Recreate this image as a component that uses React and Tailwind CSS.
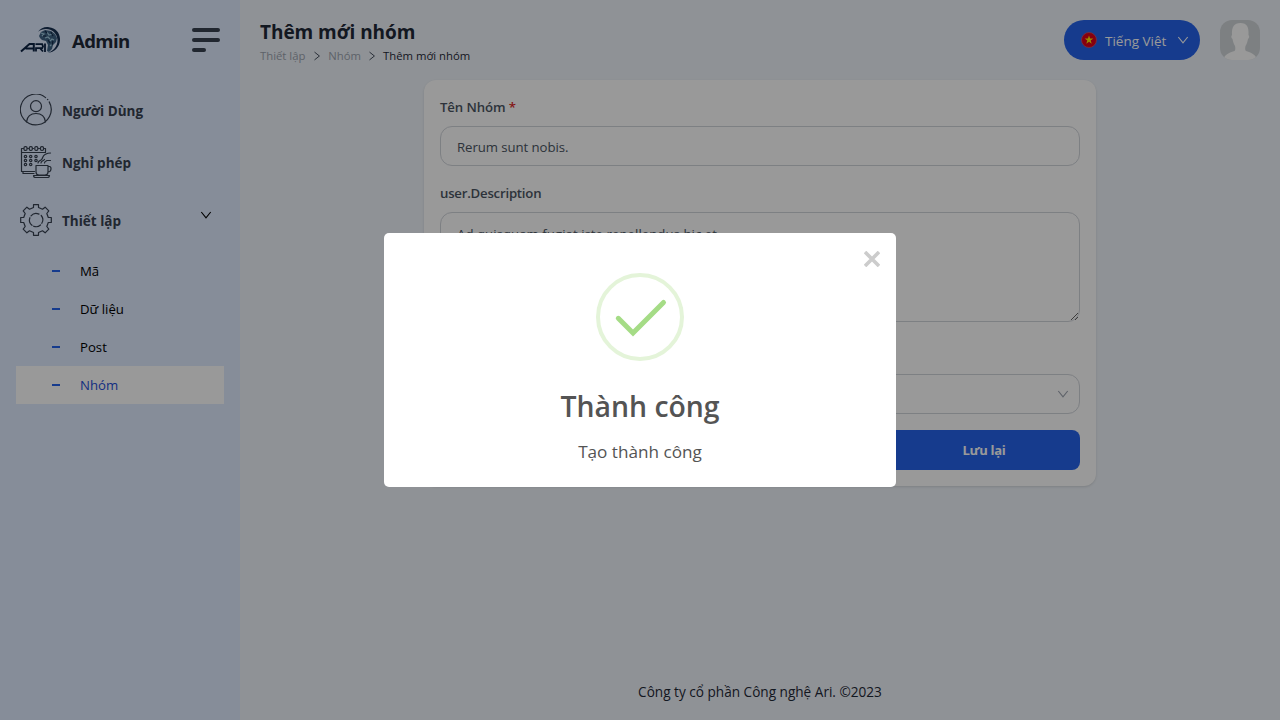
import React from 'react';

function Logo() {
  return (
    <svg className="h-10 w-10 shrink-0" viewBox="0 0 40 40" fill="none">
      <path d="M18 11.800C20.500 8 25 6.500 29 7.200c7 .8 11.300 6 11 12.800-.3 7-5.500 12.500-12.500 12.900 6-2 10.200-7 10-12.900C37.200 13.500 32 9 26 9c-3 0-5.500.8-8 2.800Z" fill="#183153" />
      <path d="M19 16l2-4 4-2 6 1 4 3 2 4-1 4-3 3-1 4-3 3-2-1 1-6-2-4-4-1-2-2Z" fill="#3f6384" />
      <path d="M21 13l3 1-2 2M27 12l2 3 4-1M25 18l3-1 2 2M30 21l2-2 2 1M30 26l2-2" stroke="#9ec9dd" strokeWidth="1.2" />
      <path d="M25 11l2 2M31 12l2 4M23 16h3M28 20l2 3M33 21l-1 4" stroke="#142c4b" strokeWidth="1.2" />
      <path d="M1 31.500l8.500-7.500h4.300v7.500M5.500 28.500h8" stroke="#0d2344" strokeWidth="2" />
      <path d="M16 31.500v-3.300h6.200l.8-1.800-.8-2.200H15.500M20 28.200l3 3.300M25 23.500v8.500" stroke="#0d2344" strokeWidth="1.8" />
    </svg>
  );
}

function UserIcon() {
  return (
    <svg className="h-8 w-8 shrink-0" viewBox="0 0 32 32" fill="none" stroke="#374151" strokeWidth="1.2" strokeLinecap="round">
      <path d="M25.600 3.600A15.400 15.400 0 1 0 29.200 7.900M27.500 5.400l.3.300" />
      <circle cx="16" cy="12.200" r="5.500" />
      <path d="M6.500 27.800C7.200 22.500 11 19.500 16 19.500s8.800 3 9.500 8.300" />
    </svg>
  );
}

function LeaveIcon() {
  return (
    <svg className="h-8 w-8 shrink-0" viewBox="0 0 32 32" fill="none" stroke="#374151" strokeWidth="1.2" strokeLinecap="round" strokeLinejoin="round">
      <path d="M3.500 2.500h-2v23h13M25.500 6V2.500h-1M1.500 6.500h24M3 25.500v2h11" />
      <path d="M7.500 2.500h1M12.500 2.500h1M18.500 2.500h1" />
      <rect x="4" y=".6" width="3" height="3.800" rx="1.200" />
      <rect x="9.300" y=".6" width="3" height="3.800" rx="1.200" />
      <rect x="14.800" y=".6" width="3" height="3.800" rx="1.200" />
      <rect x="20.500" y=".6" width="3" height="3.800" rx="1.200" />
      {[10.5, 14.5, 18.5].map((y) =>
        [5.5, 10.7, 16].map((x) =>
          x === 16 && y === 18.5 ? null : <circle key={x + '-' + y} cx={x} cy={y} r="1.200" />
        )
      )}
      <path d="M16 19.500h12v6.500c0 2-1 3-3 3h-6c-2 0-3-1-3-3ZM28 20.500h1.500c2.200 0 2.200 5.500-1.500 5.500M13.500 29.500h16c0 1.200-.8 2-2 2h-12c-1.200 0-2-.8-2-2Z" />
      <path d="M18 17c0-2.500 3-2 4-4s1-3.500 3-4.500 2-1.500 5.500-1.500M21 17c0-2 2.500-2 3.500-3.500M24.500 17c0-1.500 1.500-2 2.500-2.500H30.500" />
    </svg>
  );
}

function GearIcon() {
  return (
    <svg className="h-8 w-8 shrink-0" viewBox="0 0 32 32" fill="none" stroke="#374151" strokeWidth="1.2" strokeLinecap="round" strokeLinejoin="round">
      <path d="M13.500.7h5v2.800l4 1.700 2.600-2 3.700 3.700-2 2.600 1.500 4h3v5h-3l-1.500 4 2 2.600-3.700 3.700-2.600-2-4 1.700v2.800h-5v-2.800l-4-1.700-2.600 2-3.700-3.700 2-2.600-1.500-4h-3v-5h3l1.500-4-2-2.600 3.700-3.700 2.600 2 4-1.700Z" />
      <path d="M21.200 11.500a6.700 6.700 0 0 1 .6 7.800M20.500 21a6.700 6.700 0 0 1-6.900 1.200M12 21.300a6.700 6.700 0 0 1-2.100-7.600M11 11.800a6.700 6.700 0 0 1 8-1.700" />
    </svg>
  );
}

function Chevron({ className }) {
  return (
    <svg className={className} viewBox="0 0 12 12" fill="none" stroke="currentColor" strokeWidth="1.100">
      <path d="M1.300 3 6 8.900 10.700 3" />
    </svg>
  );
}

function MenuRow({ icon, label, className, children }) {
  return (
    <div className={`flex h-8 items-center px-5 ${className}`}>
      {icon}
      <span className="ml-2.5 pt-0.5 text-[13.500px] font-bold text-[#374151]">{label}</span>
      {children}
    </div>
  );
}

function Sidebar() {
  return (
    <aside className="h-full w-60 shrink-0 bg-[#dfebff] pt-5">
      <div className="flex h-10 items-center pl-5 pr-5">
        <Logo />
        <span className="ml-3 pt-0.5 text-[18.600px] font-bold tracking-[-0.65px] text-[#1f2937]">Admin</span>
        <div className="ml-auto flex w-7 flex-col gap-1.5">
          <span className="h-1 w-7 rounded-full bg-[#374151]" />
          <span className="h-1 w-7 rounded-full bg-[#374151]" />
          <span className="h-1 w-3.5 rounded-full bg-[#374151]" />
        </div>
      </div>
      <MenuRow icon={<UserIcon />} label="Người Dùng" className="mt-[34px]" />
      <MenuRow icon={<LeaveIcon />} label="Nghỉ phép" className="mt-5" />
      <MenuRow icon={<GearIcon />} label="Thiết lập" className="mt-[26px]">
        <Chevron className="-mt-2.5 ml-auto mr-2 h-3 w-3 text-black" />
      </MenuRow>
      <ul className="mx-4 mt-4">
        {['Mã', 'Dữ liệu', 'Post', 'Nhóm'].map((item) => (
          <li
            key={item}
            className={`flex h-[38px] items-center pl-9 text-[13.200px] ${item === 'Nhóm' ? 'bg-white text-[#1d4ed8]' : 'text-black'}`}
          >
            <span className="h-0.5 w-2 bg-[#2563eb]" />
            <span className="ml-5 pt-0.5">{item}</span>
          </li>
        ))}
      </ul>
    </aside>
  );
}

function Header() {
  return (
    <header className="flex h-20 justify-between px-5 pt-5">
      <div>
        <h1 className="text-[19px] font-bold leading-6 tracking-[-0.050px] text-[#1f2937]">Thêm mới nhóm</h1>
        <nav className="flex h-6 items-center text-[11.300px] text-[#9ca3af]">
          <span>Thiết lập</span>
          <Chevron className="mx-[6.500px] h-2.5 w-2.5 -rotate-90 text-[#374151]" />
          <span>Nhóm</span>
          <Chevron className="mx-[6px] h-2.5 w-2.5 -rotate-90 text-[#374151]" />
          <span className="text-[#1f2937]">Thêm mới nhóm</span>
        </nav>
      </div>
      <div className="flex gap-5">
        <div className="flex h-10 w-[136px] items-center rounded-[20px] bg-[#2563eb] pl-[17px] text-white">
          <svg className="h-4 w-4" viewBox="0 0 16 16">
            <circle cx="8" cy="8" r="7.500" fill="#e00019" stroke="#d95568" strokeWidth=".7" />
            <path d="M8 3.500 9.100 6.600h3.200L9.700 8.600l1 3.100L8 9.800l-2.700 1.900 1-3.100-2.600-2h3.200Z" fill="#ffe600" />
          </svg>
          <span className="ml-2 pt-0.5 text-[13.500px]">Tiếng Việt</span>
          <Chevron className="ml-auto mr-[11px] h-3 w-3" />
        </div>
        <svg className="h-10 w-10 rounded-xl" viewBox="0 0 40 40">
          <path d="M0 0h40v40H0Z" fill="#d1d6d9" />
          <path d="M3.500 40C4 35 8 33 14.500 31c1-.8 1-3 .5-5-1.500-2-2-5-2.500-7-1.500-1-1.500-3-.5-4C11.500 7 14 3 20.500 3s8.500 4 8 12c1 1 1 3-.5 4-.5 2-1 5-2.500 7-.5 2-.5 4.200.5 5 6.500 2 10 4 11 9Z" fill="#fff" />
        </svg>
      </div>
    </header>
  );
}

function GroupForm() {
  return (
    <div className="mx-auto h-[406px] w-[672px] rounded-xl bg-white px-4 pt-4 text-[13.200px] text-[#4b5563] shadow">
      <div className="h-[22px] font-semibold leading-[22px] tracking-[-0.100px]">
        Tên Nhóm <span className="text-[#dc2626]">*</span>
      </div>
      <div className="mt-2 flex h-10 items-center rounded-xl border border-[#d1d5db] px-4 pt-[3px] tracking-[-0.060px]">Rerum sunt nobis.</div>
      <div className="mt-4 h-[22px] font-semibold leading-[22px] tracking-[-0.220px]">user.Description</div>
      <textarea
        readOnly
        className="mt-2 block h-[110px] w-full resize rounded-xl border border-[#d1d5db] px-4 pt-2.5 leading-[22px] tracking-[0.050px] outline-none"
        value="Ad quisquam fugiat iste repellendus hic et."
      />
      <div className="mt-[52px] flex h-10 items-center justify-end rounded-xl border border-[#d1d5db] pr-2.5">
        <Chevron className="h-3 w-3 text-[#9ca3af]" />
      </div>
      <div className="mt-4 flex justify-end">
        <button className="h-10 w-48 rounded-lg bg-[#2563eb] pt-0.5 text-[13px] font-bold tracking-[-0.300px] text-white">Lưu lại</button>
      </div>
    </div>
  );
}

function SuccessDialog() {
  return (
    <div className="absolute inset-0 flex items-center justify-center bg-black/40">
      <div className="relative flex h-[254px] w-[512px] flex-col items-center rounded-[5px] bg-white pt-10">
        <svg className="absolute right-4 top-[18px] h-4 w-4" viewBox="0 0 16 16" stroke="#ccc" strokeWidth="3.600" strokeLinecap="butt">
          <path d="M1 1l14 14M15 1 1 15" />
        </svg>
        <svg className="h-[88px] w-[88px]" viewBox="0 0 88 88" fill="none">
          <circle cx="44" cy="44" r="42" stroke="#e4f4d9" strokeWidth="4" />
          <path d="M22.300 45.300 37 60 67.500 29.500" stroke="#a5dc86" strokeWidth="5" strokeLinecap="round" />
        </svg>
        <h2 className="mt-[25px] text-[28.400px] font-semibold leading-[40px] text-[#545454]">Thành công</h2>
        <p className="mt-3.5 text-[17.150px] leading-6 text-[#545454]">Tạo thành công</p>
      </div>
    </div>
  );
}

export default function App() {
  return (
    <div className="relative flex h-screen w-screen overflow-hidden bg-[#eff4fa] font-['Open_Sans','Noto_Sans',sans-serif]">
      <Sidebar />
      <main className="flex flex-1 flex-col">
        <Header />
        <GroupForm />
        <footer className="mb-[18px] mt-auto text-center text-[13.600px] leading-5 text-[#1f2937]">Công ty cổ phần Công nghệ Ari. ©2023</footer>
      </main>
      <SuccessDialog />
    </div>
  );
}
